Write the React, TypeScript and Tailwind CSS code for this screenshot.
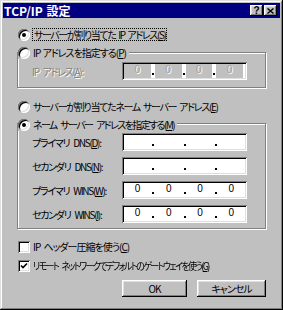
import { Fragment, type ReactNode } from "react"

const sunken =
	"bg-white shadow-[inset_1px_1px_0_#808080,inset_-1px_-1px_0_#fff,inset_2px_2px_0_#000,inset_-2px_-2px_0_#dfdfdf]"
const raised =
	"bg-[#c0c0c0] shadow-[inset_-1px_-1px_0_#000,inset_1px_1px_0_#fff,inset_-2px_-2px_0_#808080,inset_2px_2px_0_#dfdfdf]"
const etched = "border border-[#808080] shadow-[inset_1px_1px_0_#fff,1px_1px_0_#fff]"

const Radio = ({ checked }: { checked?: boolean }) => (
	<span className="flex items-center justify-center w-[12px] h-[12px] shrink-0 rounded-full bg-white shadow-[inset_1px_1px_0_#808080,inset_-1px_-1px_0_#fff,inset_2px_2px_0_#000,inset_-2px_-2px_0_#dfdfdf]">
		{checked && <span className="w-[4px] h-[4px] rounded-full bg-black" />}
	</span>
)

const Check = ({ checked }: { checked?: boolean }) => (
	<span className={`flex items-center justify-center w-[12px] h-[12px] shrink-0 ${sunken}`}>
		{checked && (
			<svg width="8" height="8" viewBox="0 0 8 8">
				<path d="M1 3.5 L3 5.5 L7 1.5" stroke="#000" strokeWidth="1.6" fill="none" />
			</svg>
		)}
	</span>
)

const Key = ({ children }: { children: ReactNode }) => <u className="underline-offset-[1px]">{children}</u>

const IpBox = ({ values, disabled }: { values?: string[]; disabled?: boolean }) => (
	<div className={`flex w-[125px] h-[18px] p-[2px] ${sunken}`}>
		{[0, 1, 2, 3].map((i) => (
			<Fragment key={i}>
				{i > 0 && (
					<span className="w-[4px] flex items-end justify-center pb-[3px] bg-white">
						<span className="w-[2px] h-[2px] bg-black" />
					</span>
				)}
				<span
					className={`flex-1 text-center tracking-normal font-['Liberation_Sans',sans-serif] text-[10px] leading-[11px] ${
						disabled ? "bg-[#c0c0c0] text-[#a0a0a0] [text-shadow:1px_1px_0_#fff]" : "text-black"
					} ${disabled && i === 3 ? "mr-[2px]" : ""}`}
				>
					{values?.[i]}
				</span>
			</Fragment>
		))}
	</div>
)

const IpRow = ({ label, values, disabled }: { label: ReactNode; values?: string[]; disabled?: boolean }) => (
	<div className="flex items-center ml-[14px]">
		<span className={`w-[90px] tracking-[-1.3px] [word-spacing:3px] ${disabled ? "text-[#808080] [text-shadow:1px_1px_0_#fff]" : ""}`}>
			{label}
		</span>
		<IpBox values={values} disabled={disabled} />
	</div>
)

const App = () => {
	const zeros = ["0", "0", "0", "0"]

	return (
		<div
			className={`w-[283px] h-[310px] p-[3px] bg-[#c0c0c0] text-black text-[10px] leading-[13px] tracking-[-1px] [word-spacing:1px] whitespace-nowrap [font-feature-settings:'palt'] font-['Noto_Sans_CJK_JP','Noto_Sans',sans-serif] shadow-[inset_-1px_-1px_0_#000,inset_1px_1px_0_#dfdfdf,inset_-2px_-2px_0_#808080,inset_2px_2px_0_#fff]`}
		>
			{/* title bar */}
			<div className="flex items-center justify-between h-[15px] bg-[#000080] pl-[1px] pr-[3px]">
				<span className="text-white font-bold text-[12px] leading-none tracking-normal">TCP/IP 設定</span>
				<div className="flex gap-[1px]">
					<span className={`flex items-center justify-center w-[13px] h-[11px] ${raised}`}>
						<span className="font-['Liberation_Sans',sans-serif] font-bold text-[10px] leading-none tracking-normal">?</span>
					</span>
					<span className={`flex items-center justify-center w-[13px] h-[11px] ${raised}`}>
						<svg width="7" height="6" viewBox="0 0 7 6">
							<path d="M0.5 0.5 L6.5 5.5 M6.5 0.5 L0.5 5.5" stroke="#000" strokeWidth="1.4" />
						</svg>
					</span>
				</div>
			</div>

			<div className="flex flex-col pl-[14px]">
				<div className="flex items-center h-[13px] mt-[10px] ml-[1px]">
					<Radio checked />
					<span className="ml-[2px] px-[1px] border border-dotted border-black leading-[11px] tracking-[-1.4px] [word-spacing:2px]">
						サーバーが割り当てた IP アドレス(<Key>S</Key>)
					</span>
				</div>

				<div className={`w-[249px] mt-[11px] pb-[7px] ${etched}`}>
					<div className="flex items-center h-[13px] -mt-[7px] w-fit pr-[3px] bg-[#c0c0c0] gap-[3px]">
						<Radio />
						<span>
							IP アドレスを指定する(<Key>P</Key>)
						</span>
					</div>
					<div className="mt-[3px]">
						<IpRow
							disabled
							values={zeros}
							label={
								<>
									IP アドレス(<Key>A</Key>):
								</>
							}
						/>
					</div>
				</div>

				<div className="flex items-center h-[13px] mt-[12px] ml-[1px] gap-[3px]">
					<Radio />
					<span className="tracking-[-1.3px] [word-spacing:2px]">
						サーバーが割り当てたネーム サーバー アドレス(<Key>E</Key>)
					</span>
				</div>

				<div className={`w-[249px] mt-[10px] pb-[5px] ${etched}`}>
					<div className="flex items-center h-[13px] -mt-[6px] w-fit pr-[3px] bg-[#c0c0c0] gap-[3px]">
						<Radio checked />
						<span className="tracking-[-1.6px] [word-spacing:3px]">
							ネーム サーバー アドレスを指定する(<Key>M</Key>)
						</span>
					</div>
					<div className="flex flex-col gap-[6px] mt-[2px]">
						<IpRow
							label={
								<>
									プライマリ DNS(<Key>D</Key>):
								</>
							}
						/>
						<IpRow
							label={
								<>
									セカンダリ DNS(<Key>N</Key>):
								</>
							}
						/>
						<IpRow
							values={zeros}
							label={
								<>
									プライマリ WINS(<Key>W</Key>):
								</>
							}
						/>
						<IpRow
							values={zeros}
							label={
								<>
									セカンダリ WINS(<Key>I</Key>):
								</>
							}
						/>
					</div>
				</div>

				<div className="flex items-center h-[13px] mt-[11px] ml-[1px] gap-[3px]">
					<Check />
					<span className="[word-spacing:2px]">
						IP ヘッダー圧縮を使う(<Key>C</Key>)
					</span>
				</div>
				<div className="flex items-center h-[13px] mt-[6px] ml-[1px] gap-[3px]">
					<Check checked />
					<span className="tracking-[-1.8px] [word-spacing:3px] scale-x-[0.9] origin-left">
						リモート ネットワークでデフォルトのゲートウェイを使う(<Key>G</Key>)
					</span>
				</div>

				<div className="flex mt-[8px] ml-[105px] gap-[10px]">
					<button className={`w-[65px] h-[17px] ${raised} flex items-center justify-center`}>OK</button>
					<button className={`w-[69px] h-[17px] ${raised} flex items-center justify-center`}>キャンセル</button>
				</div>
			</div>
		</div>
	)
}

export default App
